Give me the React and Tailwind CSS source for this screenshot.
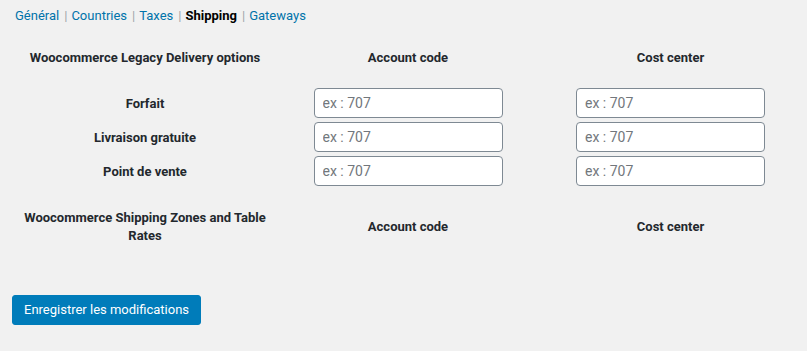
import React from 'react'

const tabs = ['Général', 'Countries', 'Taxes', 'Shipping', 'Gateways']
const legacyRows = ['Forfait', 'Livraison gratuite', 'Point de vente']

function CodeInput() {
  return (
    <input
      type="text"
      placeholder="ex : 707"
      className="w-[189px] h-[30px] bg-white border border-[#7e8993] rounded-[4px] px-[8px] text-[14px] text-[#32373c] placeholder:text-[#72777c] outline-none"
    />
  )
}

export default function App() {
  return (
    <div className="min-h-[351px] w-full bg-[#f1f1f1] font-['Roboto',sans-serif] text-[13px] text-[#23282d]">
      <div className="pt-[8px] pl-[15px] leading-[16px]">
        {tabs.map((t, i) => (
          <span key={t}>
            {i > 0 && <span className="text-[#a0a5aa] ml-[5px] mr-[4px]">|</span>}
            {t === 'Shipping' ? (
              <span className="font-bold text-black">{t}</span>
            ) : (
              <a className="text-[#0073aa]">{t}</a>
            )}
          </span>
        ))}
      </div>

      <div className="pl-[10px]">
        <div className="grid grid-cols-[270px_256px_269px] items-center h-[24px] mt-[22px] font-bold text-center leading-[18px]">
          <div>Woocommerce Legacy Delivery options</div>
          <div>Account code</div>
          <div>Cost center</div>
        </div>

        <div className="flex flex-col gap-[4px] mt-[18px]">
          {legacyRows.map((label) => (
            <div key={label} className="grid grid-cols-[270px_256px_269px] items-center h-[30px]">
              <div className="font-bold text-center pt-[2px]">{label}</div>
              <div className="flex justify-center"><CodeInput /></div>
              <div className="flex justify-center"><CodeInput /></div>
            </div>
          ))}
        </div>

        <div className="grid grid-cols-[270px_256px_269px] items-center mt-[21px] pt-[2px] font-bold text-center leading-[18px]">
          <div>Woocommerce Shipping Zones and Table Rates</div>
          <div>Account code</div>
          <div>Cost center</div>
        </div>
      </div>

      <div className="pl-[12px] mt-[50px]">
        <button className="h-[30px] px-[11px] bg-[#007cba] text-white text-[13px] rounded-[3px] border border-[#007cba]">
          Enregistrer les modifications
        </button>
      </div>
    </div>
  )
}
